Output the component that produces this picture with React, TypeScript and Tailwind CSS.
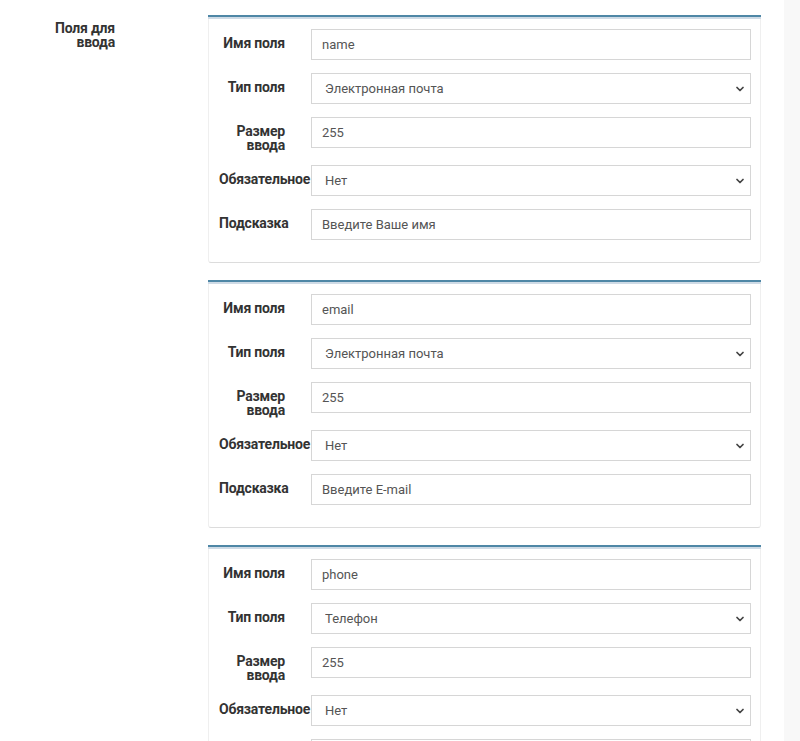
import { ChevronDown } from 'lucide-react'

// ── Data ──────────────────────────────────────────────────────────────────────
interface FieldDef {
  name:     string
  type:     string
  size:     string
  required: string
  hint:     string
}

const FIELDS: FieldDef[] = [
  { name: 'name',  type: 'Электронная почта', size: '255', required: 'Нет', hint: 'Введите Ваше имя' },
  { name: 'email', type: 'Электронная почта', size: '255', required: 'Нет', hint: 'Введите E-mail' },
  { name: 'phone', type: 'Телефон',           size: '255', required: 'Нет', hint: '' },
]

const TYPES = ['Текст', 'Электронная почта', 'Телефон']

const font = { fontFamily: 'Roboto, "Noto Sans", sans-serif' }

function Row({ label, children }: { label: string; children: React.ReactNode }) {
  return (
    <div className="flex mb-[13px]">
      <div className="w-[66px] shrink-0 ml-[10px] mr-[26px] pt-[7px] text-right text-[14px] leading-[14px] font-bold tracking-[-0.2px] text-[#333]">
        {label}
      </div>
      <div className="flex-1">{children}</div>
    </div>
  )
}

function TextInput({ value }: { value: string }) {
  return (
    <input
      defaultValue={value}
      className="w-full h-[31px] border border-[#d6d6d6] bg-white px-[10px] text-[13px] text-[#555] outline-none"
    />
  )
}

function Select({ value, options }: { value: string; options: string[] }) {
  return (
    <div className="relative">
      <select
        defaultValue={value}
        className="w-full h-[31px] appearance-none border border-[#d6d6d6] bg-white pl-[13px] pr-8 text-[13px] text-[#555] outline-none"
      >
        {options.map(o => <option key={o}>{o}</option>)}
      </select>
      <ChevronDown size={12} strokeWidth={3.5} className="absolute right-[5px] top-[10px] text-[#444] pointer-events-none" />
    </div>
  )
}

function FieldCard({ f }: { f: FieldDef }) {
  return (
    <div className="mb-[17px]">
      <div className="h-[2px] bg-[#4f87a6]" />
      <div className="h-[2px] bg-[#cfdbe6]" />
      <div className="border-x border-b border-[#efefef] border-b-[#dcdcdc] rounded-b-[3px] pt-[10px] pb-[9px] pr-[9px]">
        <Row label="Имя поля"><TextInput value={f.name} /></Row>
        <Row label="Тип поля"><Select value={f.type} options={TYPES} /></Row>
        <Row label="Размер ввода"><TextInput value={f.size} /></Row>
        <Row label="Обязательное"><Select value={f.required} options={['Нет', 'Да']} /></Row>
        <Row label="Подсказка"><TextInput value={f.hint} /></Row>
      </div>
    </div>
  )
}

export default function App() {
  return (
    <div className="flex h-[741px] overflow-hidden bg-[#f8f8f8]" style={font}>
      <div className="w-[784px] bg-white flex pt-[15px]">
        {/* Section label */}
        <div className="w-[66px] ml-[49px] pt-[6px] text-right text-[14px] leading-[14px] font-bold tracking-[-0.2px] text-[#333]">
          Поля для ввода
        </div>

        {/* Field cards */}
        <div className="ml-[93px] w-[553px]">
          {FIELDS.map(f => <FieldCard key={f.name} f={f} />)}
        </div>
      </div>
    </div>
  )
}
